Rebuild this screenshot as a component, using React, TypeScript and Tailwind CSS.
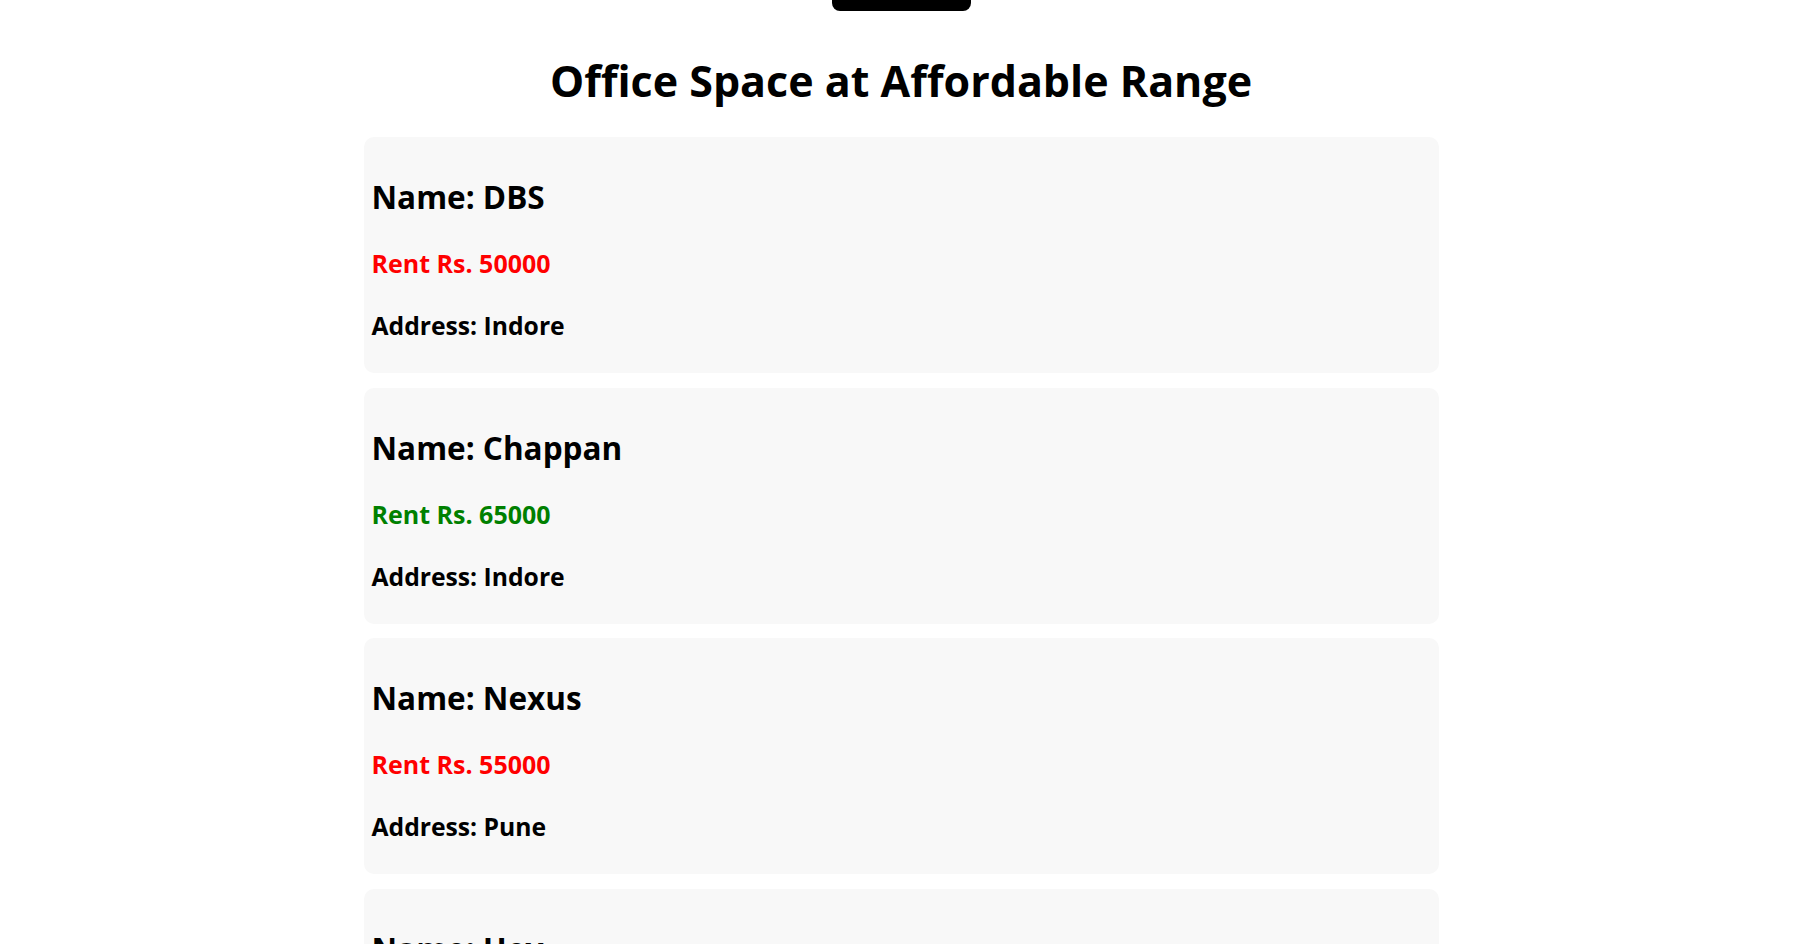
import React from "react";

const offices = [
  { name: "DBS", rent: 50000, address: "Indore" },
  { name: "Chappan", rent: 65000, address: "Indore" },
  { name: "Nexus", rent: 55000, address: "Pune" },
  { name: "Hey", rent: 70000, address: "Mumbai" },
];

export default function App() {
  return (
    <div className="min-h-screen bg-white overflow-hidden" style={{ fontFamily: '"Open Sans", "Noto Sans", sans-serif' }}>
      <div className="w-[1802px] flex flex-col items-center">
        <div className="h-[11px] w-[139px] rounded-b-[8px] bg-black" />
        <h1 className="mt-[48px] text-[43px] leading-[43px] font-bold text-black">
          Office Space at Affordable Range
        </h1>
        <div className="mt-[35px] flex flex-col gap-[14.67px]">
          {offices.map((o) => (
            <div key={o.name} className="w-[1075px] rounded-[10px] bg-[#f8f8f8] pl-[8px] pt-[44px] pb-[35px]">
              <h2 className="text-[31.5px] leading-[32px] font-bold text-black">Name: {o.name}</h2>
              <h3
                className={
                  "mt-[38px] text-[25px] leading-[25px] font-bold " +
                  (o.rent <= 60000 ? "text-[#ff0000]" : "text-[#008000]")
                }
              >
                Rent Rs. {o.rent}
              </h3>
              <h3 className="mt-[37px] text-[24.7px] leading-[25px] font-bold text-black">Address: {o.address}</h3>
            </div>
          ))}
        </div>
      </div>
    </div>
  );
}
